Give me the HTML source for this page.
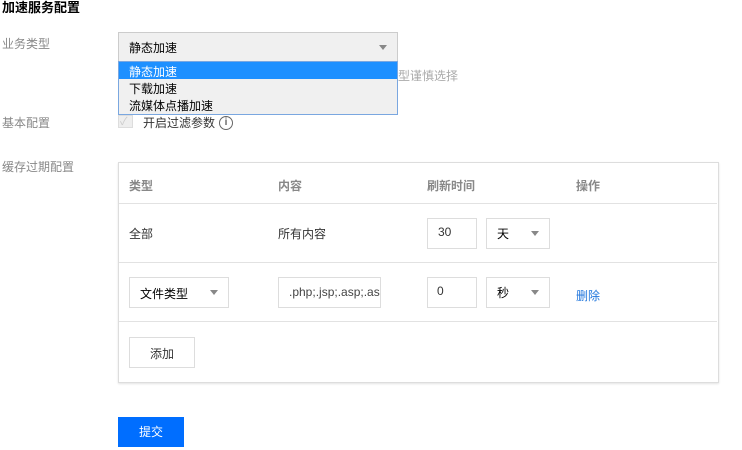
<!DOCTYPE html>
<html><head><meta charset="utf-8"><style>
*{margin:0;padding:0;box-sizing:border-box}
body{width:742px;height:450px;background:#fff;font-family:"Liberation Sans","Noto Sans CJK SC",sans-serif;font-size:12px;color:#000;position:relative;overflow:hidden}
.a{position:absolute;white-space:nowrap}
.lbl{color:#888}
.box{position:absolute;border:1px solid #ddd;background:#fff}
.tri{position:absolute;width:0;height:0;border-left:4px solid transparent;border-right:4px solid transparent;border-top:5px solid #888}
.hr{position:absolute;left:119px;width:598px;height:1px;background:#e2e2e2}
.th{color:#888;font-weight:bold}
</style></head><body>
<div class="a" style="left:2px;top:0;font-size:13px;font-weight:bold;line-height:16px">加速服务配置</div>
<div class="a lbl" style="left:2px;top:35px">业务类型</div>
<div class="box" style="left:118px;top:32px;width:280px;height:30px;background:#f0f0f0;border-color:#ccc"></div>
<div class="a" style="left:129px;top:39px">静态加速</div>
<div class="tri" style="left:379px;top:45px"></div>
<div class="a" style="left:398px;top:67px;color:#aaa">型谨慎选择</div>
<div class="box" style="left:118px;top:61px;width:280px;height:54px;background:#f0f0f0;border-color:#7aa7e0"></div>
<div class="a" style="left:119px;top:62px;width:278px;height:17px;background:#1e90ff"></div>
<div class="a" style="left:129px;top:63px;color:#fff">静态加速</div>
<div class="a" style="left:129px;top:80px">下载加速</div>
<div class="a" style="left:129px;top:97px">流媒体点播加速</div>
<div class="a lbl" style="left:2px;top:114px">基本配置</div>
<div class="box" style="left:118px;top:115px;width:15px;height:13px;background:#eee;border-color:#ddd"></div>
<div class="a" style="left:120px;top:113px;color:#ccc;font-size:11px">✓</div>
<div class="a" style="left:143px;top:114px;color:#333">开启过滤参数</div>
<div class="a" style="left:219px;top:116px;width:14px;height:14px;border:1.5px solid #666;border-radius:50%;font-size:10px;line-height:11px;text-align:center;color:#666;font-weight:bold">i</div>
<div class="a lbl" style="left:2px;top:158px">缓存过期配置</div>
<div class="box" style="left:118px;top:162px;width:601px;height:221px;border-color:#ddd;box-shadow:0 1px 2px #e4e4e4"></div>
<div class="a th" style="left:129px;top:177px">类型</div>
<div class="a th" style="left:278px;top:177px">内容</div>
<div class="a th" style="left:427px;top:177px">刷新时间</div>
<div class="a th" style="left:576px;top:177px">操作</div>
<div class="hr" style="top:203px"></div>
<div class="a" style="left:129px;top:225px;color:#333">全部</div>
<div class="a" style="left:278px;top:225px;color:#333">所有内容</div>
<div class="box" style="left:427px;top:218px;width:50px;height:31px"></div>
<div class="a" style="left:438px;top:225px;color:#333">30</div>
<div class="box" style="left:486px;top:218px;width:64px;height:31px"></div>
<div class="a" style="left:497px;top:225px">天</div>
<div class="tri" style="left:531px;top:231px"></div>
<div class="hr" style="top:262px"></div>
<div class="box" style="left:129px;top:277px;width:100px;height:31px"></div>
<div class="a" style="left:140px;top:285px">文件类型</div>
<div class="tri" style="left:210px;top:290px"></div>
<div class="box" style="left:278px;top:277px;width:103px;height:31px;overflow:hidden"><div class="a" style="left:10px;top:7px;color:#444">.php;.jsp;.asp;.aspx</div></div>
<div class="box" style="left:427px;top:277px;width:50px;height:31px"></div>
<div class="a" style="left:437px;top:284px;color:#333">0</div>
<div class="box" style="left:486px;top:277px;width:64px;height:31px"></div>
<div class="a" style="left:497px;top:284px">秒</div>
<div class="tri" style="left:531px;top:290px"></div>
<div class="a" style="left:576px;top:287px;color:#2277dd">删除</div>
<div class="hr" style="top:321px"></div>
<div class="box" style="left:129px;top:337px;width:66px;height:31px"></div>
<div class="a" style="left:150px;top:345px;color:#333">添加</div>
<div class="a" style="left:118px;top:417px;width:66px;height:30px;background:#006eff;color:#fff;text-align:center;line-height:30px">提交</div>
</body></html>
